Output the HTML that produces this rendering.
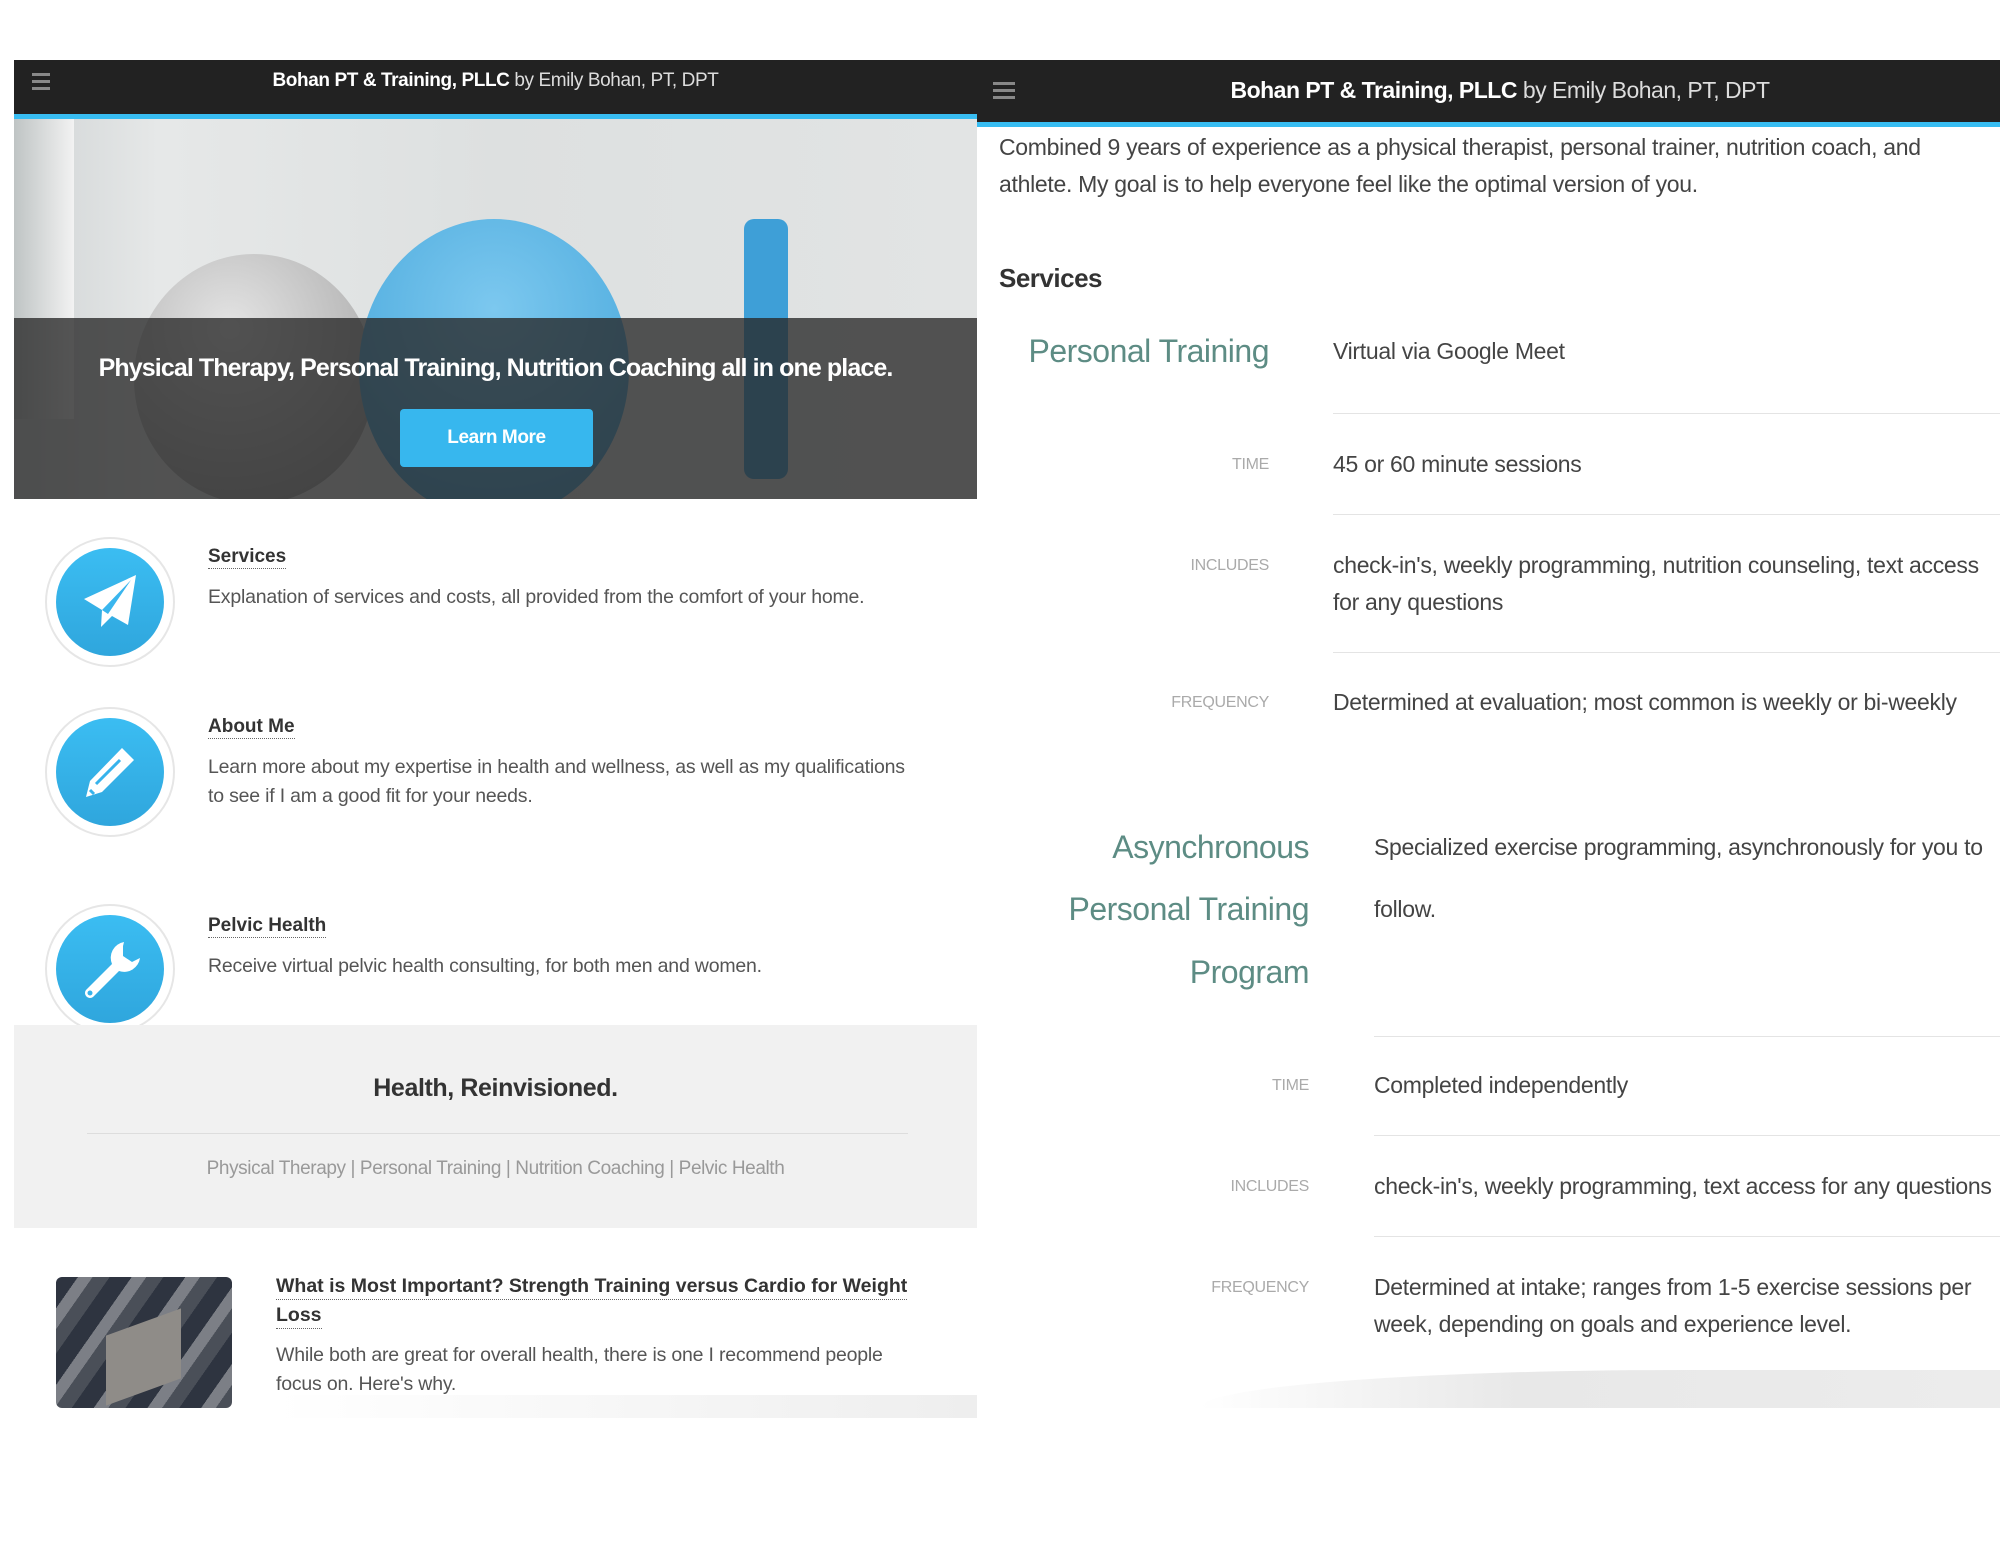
<!DOCTYPE html>
<html><head><meta charset="utf-8"><style>
*{margin:0;padding:0;box-sizing:border-box}
body{width:2000px;height:1545px;background:#fff;position:relative;overflow:hidden;font-family:"Liberation Sans",sans-serif;color:#444}
.a{position:absolute;white-space:nowrap;line-height:1}
.hdr{position:absolute;background:#222;}
.blue{position:absolute;background:#38bdf2}
.ham{position:absolute;width:18px}
.ham i{display:block;height:3px;background:#888;margin-bottom:4px}
.circ{position:absolute;width:130px;height:130px;border-radius:50%;border:2px solid #e6e6e6;background:#fff}
.circ .in{position:absolute;left:9px;top:9px;width:108px;height:108px;border-radius:50%;background:linear-gradient(#3bbdf2,#2fa6dd)}
.t{font-weight:bold;color:#333;font-size:19px;border-bottom:1px dotted #666;padding-bottom:2px}
.d{font-size:19.5px;color:#555;letter-spacing:-0.2px}
.lbl{font-size:16px;color:#aaa;text-align:right;letter-spacing:-0.3px}
.v{font-size:23px;color:#444;letter-spacing:-0.3px}
.ln{position:absolute;height:1px;background:#e4e4e4}
.teal{color:#5d8c84;font-size:32px;text-align:right;letter-spacing:-0.5px}
</style></head><body>

<div class="hdr" style="left:14px;top:60px;width:963px;height:54px"></div>
<div class="blue" style="left:14px;top:114px;width:963px;height:5px"></div>
<div class="ham" style="left:32px;top:73px"><i></i><i></i><i></i></div>
<div class="a" style="left:14px;width:963px;top:71px;text-align:center;color:#fff;font-size:19px;letter-spacing:-0.4px"><b>Bohan PT &amp; Training, PLLC</b> <span style="color:#ddd">by Emily Bohan, PT, DPT</span></div>

<div style="position:absolute;left:14px;top:119px;width:963px;height:380px;overflow:hidden;background:linear-gradient(90deg,#cfd3d4 0%,#e6e8e8 15%,#dde0e0 50%,#e2e4e4 100%)">
  <div style="position:absolute;left:0;top:0;width:60px;height:300px;background:linear-gradient(90deg,#bfc4c4,#f2f2f2)"></div>
  <div style="position:absolute;left:120px;top:135px;width:240px;height:250px;border-radius:50%;background:radial-gradient(circle at 40% 30%,#e4e4e4,#9a9a9a)"></div>
  <div style="position:absolute;left:345px;top:100px;width:270px;height:300px;border-radius:50%;background:radial-gradient(circle at 50% 30%,#7cc8ef,#3a9fd6)"></div>
  <div style="position:absolute;left:730px;top:100px;width:44px;height:260px;border-radius:10px;background:#3e9fd7"></div>
  <div style="position:absolute;left:0;top:199px;width:963px;height:181px;background:rgba(40,40,40,0.78)"></div>
</div>
<div class="a" style="left:14px;width:963px;top:356px;text-align:center;color:#fff;font-size:25px;font-weight:bold;letter-spacing:-0.9px">Physical Therapy, Personal Training, Nutrition Coaching all in one place.</div>
<div class="a" style="left:400px;top:409px;width:193px;height:58px;background:#37b7ee;border-radius:4px;color:#fff;font-weight:bold;font-size:19px;text-align:center;line-height:58px;letter-spacing:-0.4px">Learn More</div>

<div class="circ" style="left:45px;top:537px"><div class="in">
<svg width="108" height="108" viewBox="0 0 108 108"><path d="M28 51 L80 27 L72 77 L56 68 L45 79 L46 62 Z" fill="#fff"/><path d="M46 62 L75 32 L52 66 Z" fill="#3ab6ee"/></svg></div></div>
<div class="circ" style="left:45px;top:707px"><div class="in">
<svg width="108" height="108" viewBox="0 0 108 108"><path d="M66 30 L78 42 L46 74 L30 79 L34 63 Z" fill="#fff"/><path d="M40 66 L64 42" stroke="#37b3ec" stroke-width="3"/><path d="M34 72 L38 76 L36 74" stroke="#37b3ec" stroke-width="3"/></svg></div></div>
<div class="circ" style="left:45px;top:904px"><div class="in">
<svg width="108" height="108" viewBox="0 0 108 108"><path d="M68 27 A16 16 0 0 0 56 49 L30 75 A5 5 0 0 0 37 82 L63 56 A16 16 0 0 0 84 43 L76 47 L67 41 L67 31 Z" fill="#fff"/><circle cx="34" cy="78" r="2.5" fill="#37b3ec"/></svg></div></div>

<div class="a t" style="left:208px;top:547px">Services</div>
<div class="a d" style="left:208px;top:588px">Explanation of services and costs, all provided from the comfort of your home.</div>
<div class="a t" style="left:208px;top:717px">About Me</div>
<div class="a d" style="left:208px;top:758px">Learn more about my expertise in health and wellness, as well as my qualifications</div>
<div class="a d" style="left:208px;top:787px">to see if I am a good fit for your needs.</div>
<div class="a t" style="left:208px;top:916px">Pelvic Health</div>
<div class="a d" style="left:208px;top:957px">Receive virtual pelvic health consulting, for both men and women.</div>

<div style="position:absolute;left:14px;top:1025px;width:963px;height:203px;background:#f1f1f1"></div>
<div class="a" style="left:14px;width:963px;top:1076px;text-align:center;font-size:25px;font-weight:bold;color:#333;letter-spacing:-0.4px">Health, Reinvisioned.</div>
<div class="ln" style="left:87px;top:1133px;width:821px;background:#ddd"></div>
<div class="a" style="left:14px;width:963px;top:1159px;text-align:center;font-size:19px;color:#999;letter-spacing:-0.4px">Physical Therapy | Personal Training | Nutrition Coaching | Pelvic Health</div>

<div style="position:absolute;left:56px;top:1277px;width:176px;height:131px;border-radius:6px;overflow:hidden;background:repeating-linear-gradient(125deg,#2e3440 0 18px,#7c7f86 18px 30px,#4a4f58 30px 44px);">
<div style="position:absolute;left:50px;top:45px;width:75px;height:70px;background:#8f8c88;transform:skewY(-20deg)"></div></div>
<div style="position:absolute;left:276px;top:1395px;width:701px;height:23px;background:linear-gradient(90deg,#fff,#eee)"></div>
<div class="a t" style="left:276px;top:1277px;font-size:19.5px">What is Most Important? Strength Training versus Cardio for Weight</div>
<div class="a t" style="left:276px;top:1306px;font-size:19.5px">Loss</div>
<div class="a d" style="left:276px;top:1346px">While both are great for overall health, there is one I recommend people</div>
<div class="a d" style="left:276px;top:1375px">focus on. Here's why.</div>

<div class="hdr" style="left:977px;top:60px;width:1023px;height:62px"></div>
<div class="blue" style="left:977px;top:122px;width:1023px;height:5px"></div>
<div class="ham" style="left:993px;top:82px;width:22px"><i></i><i></i><i></i></div>
<div class="a" style="left:977px;width:1046px;top:79px;text-align:center;color:#fff;font-size:23px;letter-spacing:-0.5px"><b>Bohan PT &amp; Training, PLLC</b> <span style="color:#ddd">by Emily Bohan, PT, DPT</span></div>

<div class="a v" style="left:999px;top:136px">Combined 9 years of experience as a physical therapist, personal trainer, nutrition coach, and</div>
<div class="a v" style="left:999px;top:173px">athlete. My goal is to help everyone feel like the optimal version of you.</div>
<div class="a" style="left:999px;top:265px;font-size:26px;font-weight:bold;color:#333;letter-spacing:-0.5px">Services</div>

<div class="a teal" style="right:731px;top:335px">Personal Training</div>
<div class="a v" style="left:1333px;top:340px">Virtual via Google Meet</div>
<div class="ln" style="left:1333px;top:413px;width:667px"></div>
<div class="a lbl" style="right:731px;top:457px">TIME</div>
<div class="a v" style="left:1333px;top:453px">45 or 60 minute sessions</div>
<div class="ln" style="left:1333px;top:514px;width:667px"></div>
<div class="a lbl" style="right:731px;top:558px">INCLUDES</div>
<div class="a v" style="left:1333px;top:554px">check-in's, weekly programming, nutrition counseling, text access</div>
<div class="a v" style="left:1333px;top:591px">for any questions</div>
<div class="ln" style="left:1333px;top:652px;width:667px"></div>
<div class="a lbl" style="right:731px;top:695px">FREQUENCY</div>
<div class="a v" style="left:1333px;top:691px">Determined at evaluation; most common is weekly or bi-weekly</div>

<div class="a teal" style="right:691px;top:831px">Asynchronous</div>
<div class="a teal" style="right:691px;top:893px">Personal Training</div>
<div class="a teal" style="right:691px;top:956px">Program</div>
<div class="a v" style="left:1374px;top:836px">Specialized exercise programming, asynchronously for you to</div>
<div class="a v" style="left:1374px;top:898px">follow.</div>
<div class="ln" style="left:1374px;top:1036px;width:626px"></div>
<div class="a lbl" style="right:691px;top:1078px">TIME</div>
<div class="a v" style="left:1374px;top:1074px">Completed independently</div>
<div class="ln" style="left:1374px;top:1135px;width:626px"></div>
<div class="a lbl" style="right:691px;top:1179px">INCLUDES</div>
<div class="a v" style="left:1374px;top:1175px">check-in's, weekly programming, text access for any questions</div>
<div class="ln" style="left:1374px;top:1236px;width:626px"></div>
<div class="a lbl" style="right:691px;top:1280px">FREQUENCY</div>
<div class="a v" style="left:1374px;top:1276px">Determined at intake; ranges from 1-5 exercise sessions per</div>
<div class="a v" style="left:1374px;top:1313px">week, depending on goals and experience level.</div>
<div style="position:absolute;left:1200px;top:1370px;width:800px;height:38px;background:linear-gradient(90deg,rgba(255,255,255,1),rgba(232,232,232,1) 40%,#ececec);border-radius:60% 0 0 0/100% 0 0 0"></div>
</body></html>
